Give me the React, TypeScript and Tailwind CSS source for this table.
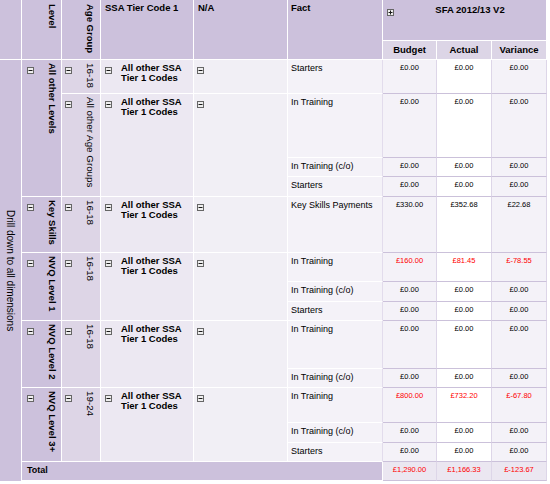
const Minus = () => (
  <svg width="7" height="7" viewBox="0 0 7 7" className="block shrink-0">
    <rect x="0.5" y="0.5" width="6" height="6" fill="#eeeeee" stroke="#666666" />
    <path d="M1.5 3.5H5.5" stroke="#1a1a1a" />
  </svg>
);

const Plus = () => (
  <svg width="7" height="7" viewBox="0 0 7 7" className="block shrink-0">
    <rect x="0.5" y="0.5" width="6" height="6" fill="#eeeeee" stroke="#666666" />
    <path d="M1.5 3.5H5.5M3.5 1.5V5.5" stroke="#1a1a1a" />
  </svg>
);

const zero = ["£0.00", "£0.00", "£0.00"];
const dataCell =
  "border-r border-b border-r-[#ddd6e8] border-b-[#cbc1da] text-center pt-[3px] text-[7.5px] leading-[9px]";

function Fact({ label, vals = zero, red }: { label: string; vals?: string[]; red?: boolean }) {
  const color = red ? "text-[#ff0000]" : "text-black";
  return (
    <>
      <div className="bg-[#f4f2f8] border-r border-b border-r-[#e2dcec] border-b-white pl-[3px] pt-[3px] text-[9px] leading-[11px]">
        {label}
      </div>
      <div className={`bg-[#f4f2f8] ${dataCell} ${color}`}>{vals[0]}</div>
      <div className={`bg-white ${dataCell} ${color}`}>{vals[1]}</div>
      <div className={`bg-[#f4f2f8] ${dataCell} ${color}`}>{vals[2]}</div>
    </>
  );
}

function Level({ label, span }: { label: string; span: string }) {
  return (
    <div className={`${span} bg-[#ccc1dc] border-r border-b border-white flex justify-between pl-[5px] pr-[3px] pt-[3px]`}>
      <div className="mt-[4px]">
        <Minus />
      </div>
      <span className="[writing-mode:vertical-rl] font-bold text-[9.5px] leading-[11px] whitespace-nowrap">{label}</span>
    </div>
  );
}

function Age({ label, span }: { label: string; span: string }) {
  return (
    <div className={`${span} bg-[#ddd5e6] border-r border-b border-white flex justify-between pl-[3px] pr-[4px] pt-[3px]`}>
      <div className="mt-[4px]">
        <Minus />
      </div>
      <span className="[writing-mode:vertical-rl] text-[9.8px] leading-[11px] whitespace-nowrap">{label}</span>
    </div>
  );
}

function Ssa({ span }: { span: string }) {
  return (
    <div className={`${span} bg-[#ece8f2] border-r border-b border-white flex gap-[9px] pl-[4px] pt-[3px]`}>
      <div className="mt-[4px]">
        <Minus />
      </div>
      <span className="font-bold text-[9.5px] leading-[10px]">All other SSA Tier 1 Codes</span>
    </div>
  );
}

function Na({ span }: { span: string }) {
  return (
    <div className={`${span} bg-[#f1eff5] border-r border-b border-white pl-[3px] pt-[7px]`}>
      <Minus />
    </div>
  );
}

const hdr = "bg-[#ccc1dc] border-r border-b border-white";

export default function App() {
  return (
    <div className="bg-white min-h-[484px] font-['Liberation_Sans',Arial,sans-serif] text-black">
      <div className="grid w-[547px] grid-cols-[22px_40px_39px_93px_94px_95px_54px_55px_55px] grid-rows-[41px_19px_34px_64px_19px_20px_56px_29px_20px_19px_48px_19px_35px_20px_19px_19px]">
        {/* header */}
        <div className={`${hdr} row-span-2`} />
        <div className={`${hdr} row-span-2 flex justify-end pr-[3px] pt-[4px]`}>
          <span className="[writing-mode:vertical-rl] font-bold text-[9.5px] leading-[11px]">Level</span>
        </div>
        <div className={`${hdr} row-span-2 flex justify-end pr-[4px] pt-[4px]`}>
          <span className="[writing-mode:vertical-rl] font-bold text-[9.5px] leading-[11px] whitespace-nowrap">Age Group</span>
        </div>
        <div className={`${hdr} row-span-2 pl-[4px] pt-[3px] font-bold text-[9.5px] leading-[10px]`}>SSA Tier Code 1</div>
        <div className={`${hdr} row-span-2 pl-[4px] pt-[3px] font-bold text-[9.5px] leading-[10px]`}>N/A</div>
        <div className={`${hdr} row-span-2 pl-[3px] pt-[3px] font-bold text-[9.5px] leading-[10px]`}>Fact</div>
        <div className={`${hdr} col-span-3 flex pl-[4px] pt-[5px]`}>
          <div className="mt-[4px]">
            <Plus />
          </div>
          <div className="flex-1 text-center font-bold text-[9.5px] leading-[10px]">SFA 2012/13 V2</div>
        </div>
        <div className="bg-[#dcd5e6] border-r border-b border-white flex items-center justify-center font-bold text-[9.5px]">Budget</div>
        <div className="bg-[#dcd5e6] border-r border-b border-white flex items-center justify-center font-bold text-[9.5px]">Actual</div>
        <div className="bg-[#dcd5e6] border-r border-b border-white flex items-center justify-center font-bold text-[9.5px]">Variance</div>

        {/* body */}
        <div className="row-span-14 bg-[#ccc1dc] border-r border-white flex items-center justify-center">
          <span className="[writing-mode:vertical-rl] text-[10px] leading-[11px] whitespace-nowrap">Drill down to all dimensions</span>
        </div>

        <Level label="All other Levels" span="row-span-4" />
        <Age label="16-18" span="row-span-1" />
        <Ssa span="row-span-1" />
        <Na span="row-span-1" />
        <Fact label="Starters" />

        <Age label="All other Age Groups" span="row-span-3" />
        <Ssa span="row-span-3" />
        <Na span="row-span-3" />
        <Fact label="In Training" />
        <Fact label="In Training (c/o)" />
        <Fact label="Starters" />

        <Level label="Key Skills" span="row-span-1" />
        <Age label="16-18" span="row-span-1" />
        <Ssa span="row-span-1" />
        <Na span="row-span-1" />
        <Fact label="Key Skills Payments" vals={["£330.00", "£352.68", "£22.68"]} />

        <Level label="NVQ Level 1" span="row-span-3" />
        <Age label="16-18" span="row-span-3" />
        <Ssa span="row-span-3" />
        <Na span="row-span-3" />
        <Fact label="In Training" vals={["£160.00", "£81.45", "£-78.55"]} red />
        <Fact label="In Training (c/o)" />
        <Fact label="Starters" />

        <Level label="NVQ Level 2" span="row-span-2" />
        <Age label="16-18" span="row-span-2" />
        <Ssa span="row-span-2" />
        <Na span="row-span-2" />
        <Fact label="In Training" />
        <Fact label="In Training (c/o)" />

        <Level label="NVQ Level 3+" span="row-span-3" />
        <Age label="19-24" span="row-span-3" />
        <Ssa span="row-span-3" />
        <Na span="row-span-3" />
        <Fact label="In Training" vals={["£800.00", "£732.20", "£-67.80"]} red />
        <Fact label="In Training (c/o)" />
        <Fact label="Starters" />

        {/* total */}
        <div className="col-span-5 bg-[#ccc1dc] border-r border-b border-white pl-[5px] pt-[3px] font-bold text-[9px] leading-[11px]">
          Total
        </div>
        <div className={`bg-[#ebe7f1] ${dataCell} text-[#ff0000]`}>£1,290.00</div>
        <div className={`bg-[#ebe7f1] ${dataCell} text-[#ff0000]`}>£1,166.33</div>
        <div className={`bg-[#ebe7f1] ${dataCell} text-[#ff0000]`}>£-123.67</div>
      </div>
    </div>
  );
}
